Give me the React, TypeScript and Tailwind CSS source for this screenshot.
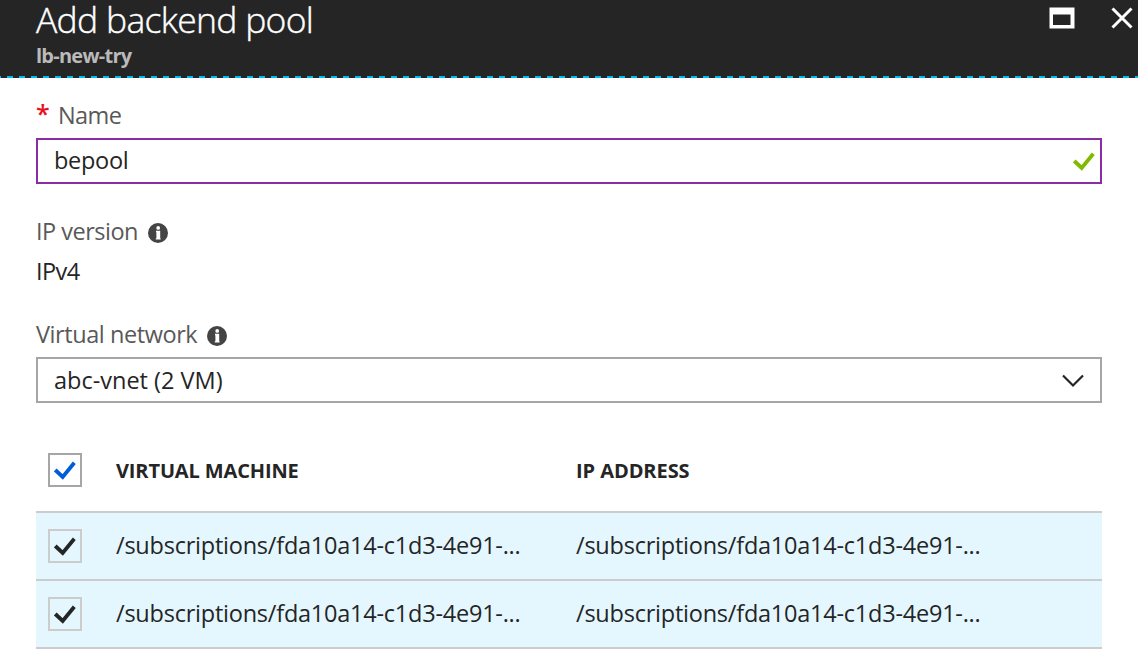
import type { ReactNode } from 'react';

function CheckMark({ className }: { className: string }) {
  return (
    <svg viewBox="0 0 22 20" width="22" height="20" className={className} fill="none" stroke="currentColor" strokeWidth="3.8">
      <path d="M1.3 10 L8.7 17 L20.3 2.8" />
    </svg>
  );
}

function InfoIcon() {
  return (
    <svg viewBox="0 0 20 20" width="20" height="20" className="mt-[3px] shrink-0">
      <circle cx="10" cy="10" r="10" fill="#444444" />
      <circle cx="10.2" cy="4.9" r="1.9" fill="#fff" />
      <path d="M8 7.8 H12.2 V15.2 H12.6 V16.6 H7.8 V15.2 H8.4 V9.2 H8 Z" fill="#fff" />
    </svg>
  );
}

function Checkbox({ header = false }: { header?: boolean }) {
  return (
    <div className={`flex h-[34px] w-[34px] shrink-0 items-center justify-center border-2 ${header ? 'border-[#a6a6a6]' : 'border-[#cccccc]'}`}>
      <CheckMark className={header ? 'text-[#015cda]' : 'text-[#252525]'} />
    </div>
  );
}

function Label({ children, className }: { children: ReactNode; className: string }) {
  return <span className={`whitespace-nowrap text-[#595959] ${className}`}>{children}</span>;
}

const path = '/subscriptions/fda10a14-c1d3-4e91-...';

function Row() {
  return (
    <div className="flex h-[68px] items-center border-b-2 border-[#cccccc] bg-[#e4f7fe] pl-3">
      <Checkbox />
      <span className="ml-[34px] w-[460px] pb-0.5 whitespace-nowrap tracking-[-0.23px]">{path}</span>
      <span className="pb-0.5 whitespace-nowrap tracking-[-0.23px]">{path}</span>
    </div>
  );
}

export default function App() {
  return (
    <div className="h-[652px] w-[1138px] overflow-hidden bg-white font-['Open_Sans','Noto_Sans',sans-serif] text-[23.5px] leading-8 text-[#252525]">
      <header className="flex h-[76px] justify-between bg-[#252525] pl-9 text-white">
        <div>
          <h1 className="h-[42px] whitespace-nowrap text-[35.5px] leading-[39px] font-light tracking-[-0.7px] [-webkit-text-stroke:0.4px_white]">Add backend pool</h1>
          <p className="whitespace-nowrap text-[20px] leading-[28px] font-bold tracking-[-0.75px] text-[#bababa]">lb-new-try</p>
        </div>
        <div className="flex items-start">
          <svg width="26" height="22" viewBox="0 0 26 22" className="mt-[7px]">
            <path fillRule="evenodd" fill="#fff" d="M.5 .5 H25.5 V21.5 H.5 Z M4 7.5 V18 H21.5 V7.5 Z" />
          </svg>
          <svg width="22" height="22" viewBox="0 0 22 22" className="mt-[7px] mr-[5px] ml-9" fill="none" stroke="#fff" strokeWidth="3">
            <path d="M1.5 1.5 L20.5 20.5 M20.5 1.5 L1.5 20.5" />
          </svg>
        </div>
      </header>
      <div className="h-0.5 bg-[repeating-linear-gradient(90deg,#00bcf2_0_1px,#252525_1px_7px,#00bcf2_7px_12px)]" />

      <main className="px-9 pt-[21px]">
        <div className="flex h-[39px] items-start">
          <span className="w-[22px] text-[25px] leading-[29px] font-semibold text-[#e81123]">*</span>
          <Label className="tracking-[-0.6px]">Name</Label>
        </div>
        <div className="flex h-[46px] items-center justify-between border-2 border-[#8a2da5] pr-[5px] pl-4">
          <span className="pb-0.5 whitespace-nowrap tracking-[-0.3px]">bepool</span>
          <CheckMark className="text-[#7fba00]" />
        </div>

        <div className="mt-[31px] flex h-8 items-center gap-2.5">
          <Label className="tracking-[-0.5px]">IP version</Label>
          <InfoIcon />
        </div>
        <div className="mt-2 h-8 tracking-[-0.6px]">IPv4</div>

        <div className="mt-[31px] flex h-8 items-center gap-2.5">
          <Label className="tracking-[-0.43px]">Virtual network</Label>
          <InfoIcon />
        </div>
        <div className="mt-[7px] flex h-[46px] items-center justify-between border-2 border-[#a6a6a6] pr-4 pl-4">
          <span className="whitespace-nowrap">abc-vnet (2 VM)</span>
          <svg width="22" height="14" viewBox="0 0 22 14" className="mt-0.5" fill="none" stroke="#252525" strokeWidth="2.2">
            <path d="M1 1.5 L11 11.5 L21 1.5" />
          </svg>
        </div>

        <div className="mt-[26px] flex h-[84px] items-center border-b-2 border-[#cccccc] pl-3 text-[20px] font-bold">
          <Checkbox header />
          <span className="ml-[34px] w-[460px] pt-0.5 whitespace-nowrap tracking-[-0.13px]">VIRTUAL MACHINE</span>
          <span className="pt-0.5 whitespace-nowrap tracking-[-0.07px]">IP ADDRESS</span>
        </div>
        <Row />
        <Row />
      </main>
    </div>
  );
}
